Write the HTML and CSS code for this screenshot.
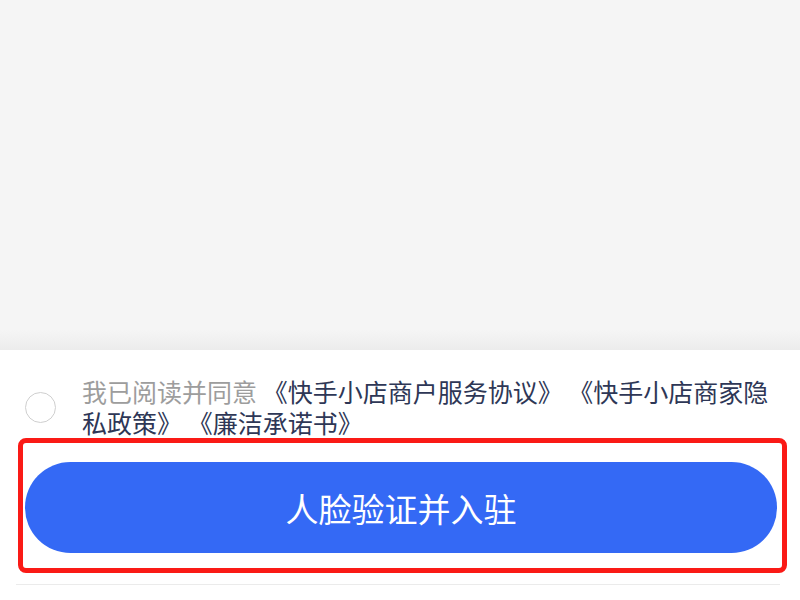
FILE: index.html
```html
<!DOCTYPE html>
<html lang="zh-CN">
<head>
<meta charset="utf-8">
<link rel="stylesheet" href="styles.css">
</head>
<body>
<div class="top"></div>
<div class="panel">
  <div class="agree">
    <span class="check"></span>
    <p class="agree-text"><span class="muted">我已阅读并同意</span> <span class="link">《快手小店商户服务协议》</span> <span class="link">《快手小店商家隐</span><span class="link">私政策》</span> <span class="link">《廉洁承诺书》</span></p>
  </div>
  <div class="btn-wrap">
    <button class="btn">人脸验证并入驻</button>
    <span class="highlight"></span>
  </div>
  <div class="divider"></div>
</div>
</body>
</html>
```
FILE: styles.css
```css
html, body {
  margin: 0;
  padding: 0;
  background: #ffffff;
  font-family: "Noto Sans CJK SC", "Noto Sans", sans-serif;
}
.top {
  height: 350px;
  background: linear-gradient(to bottom, #f5f5f5 0, #f5f5f5 330px, #ececec 350px);
}
.panel {
  background: #ffffff;
}
.agree {
  display: flex;
  align-items: center;
  padding: 26px 24px 0 25px;
  gap: 26px;
}
.check {
  flex: none;
  width: 29px;
  height: 29px;
  border: 1.5px solid #cfcfcf;
  border-radius: 50%;
}
.agree-text {
  margin: 0;
  font-size: 25px;
  line-height: 31px;
  color: #9b9b9b;
}
.muted,
.link {
  display: inline-block;
  height: 31px;
  vertical-align: top;
}
.muted {
  color: #9d9d9d;
}
.link {
  color: #2e3756;
}
.btn-wrap {
  position: relative;
  margin: 24px 23px 0 25px;
}
.btn {
  display: block;
  width: 100%;
  height: 91px;
  border: none;
  border-radius: 46px;
  background: #3469f5;
  color: #ffffff;
  font-family: "Noto Sans CJK SC", "Noto Sans", sans-serif;
  font-size: 33px;
  padding: 0;
}
.highlight {
  position: absolute;
  top: -24px;
  left: -7px;
  width: 759px;
  height: 125px;
  border: 5px solid #fa1a16;
  border-radius: 8px;
  pointer-events: none;
}
.divider {
  margin: 31px 20px 0 16px;
  height: 1px;
  background: #ebebeb;
}
```
